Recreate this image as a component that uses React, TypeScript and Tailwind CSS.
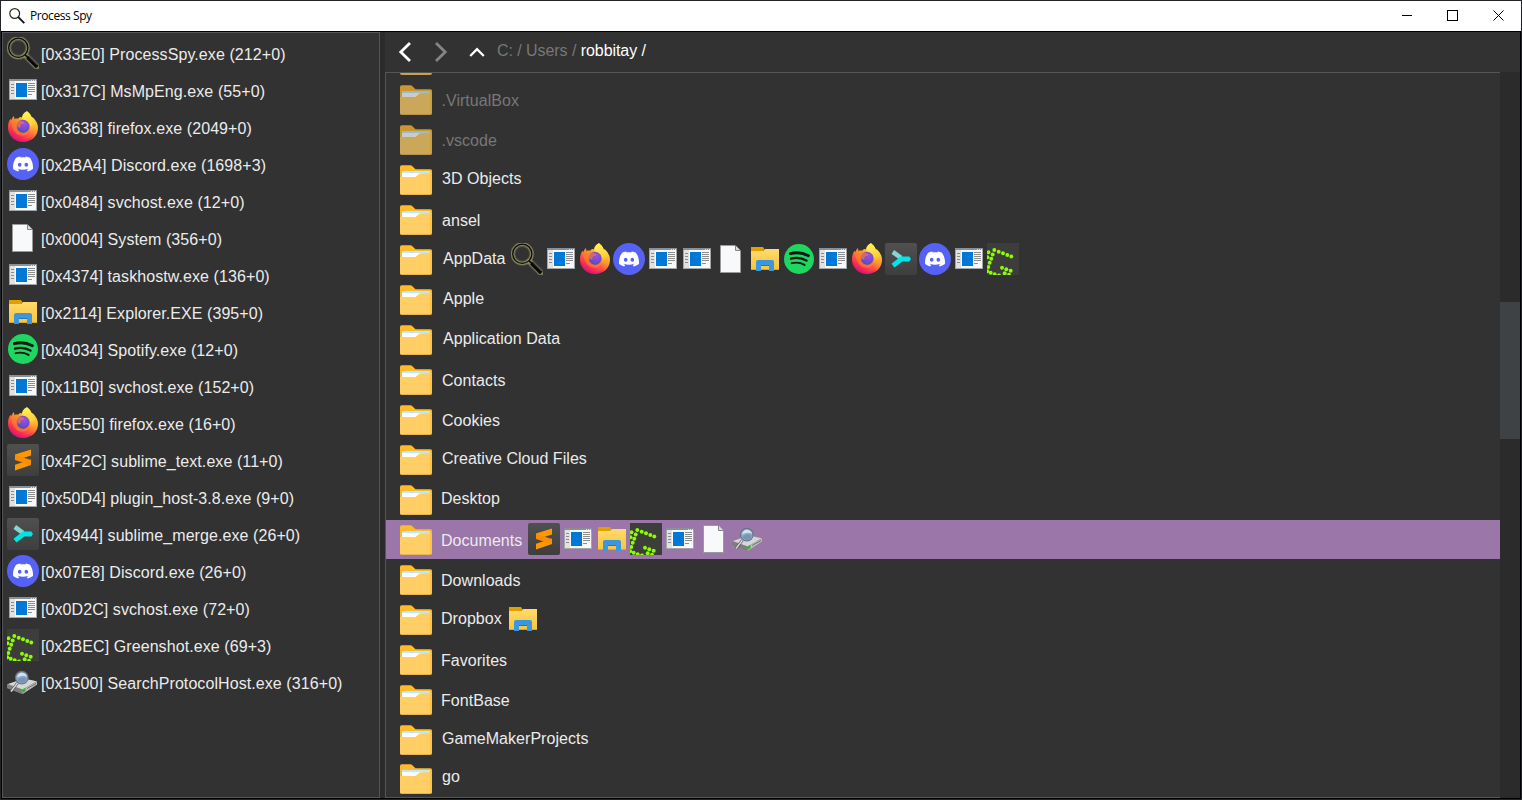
import React from "react";
import { SiDiscord } from "react-icons/si";

type IconName =
  | "spy" | "window" | "firefox" | "discord" | "file" | "explorer"
  | "spotify" | "sublime" | "merge" | "greenshot" | "search";

const Spy = () => (
  <svg viewBox="0 0 32 32" className="block size-8">
    <g fill="none" stroke="#98956a" strokeLinecap="round">
      <circle cx="11.3" cy="10.8" r="9.4" strokeWidth="5" opacity=".35" />
      <circle cx="11.3" cy="10.8" r="9.6" strokeWidth="3.2" opacity=".75" />
      <path d="M18.5 18.5 30 30" strokeWidth="7" opacity=".3" />
      <path d="M18.5 18.5 30 30" strokeWidth="5.200" opacity=".6" />
    </g>
    <circle cx="11.3" cy="10.8" r="9.6" fill="none" stroke="#0b0b08" strokeWidth="1.3" />
    <path d="M18 17.6 21 20.6" stroke="#0b0b08" strokeWidth="1.5" />
    <path d="M20.5 20.3 30.2 30" stroke="#050505" strokeWidth="3.6" />
    <path d="M22 20.4 30 28.2" stroke="#55533a" strokeWidth=".6" />
  </svg>
);

const WindowIcon = () => (
  <svg viewBox="0 0 32 32" className="block size-8" shapeRendering="crispEdges">
    <rect x="2" y="5" width="28" height="21" fill="#a3a6a8" />
    <rect x="2" y="5" width="28" height="2" fill="#8b9094" />
    <path d="M24 5.5h1v1h-1zM26 5.5h1v1h-1zM28 5.5h1v1h-1z" fill="#e3e6e8" />
    <rect x="3" y="7" width="26" height="18" fill="#f8f8f8" />
    <rect x="3" y="7" width="5" height="18" fill="#e2e2e2" />
    <rect x="9" y="9" width="11" height="14" fill="#0078d7" />
    <path d="M4 10h3M4 13h3M4 16h3M4 19h3" transform="translate(0 .5)" stroke="#8c8c8c" />
    <path d="M21 9.5h7M21 11.5h7M21 13.5h7M21 15.5h7M21 17.5h7M21 20.5h4" stroke="#8c8c8c" />
  </svg>
);

const Firefox = () => (
  <svg viewBox="0 0 32 32" className="block size-8">
    <defs>
      <linearGradient id="ffBody" x1=".85" y1=".1" x2=".3" y2="1">
        <stop offset="0" stopColor="#fff44f" />
        <stop offset=".3" stopColor="#ffb52c" />
        <stop offset=".55" stopColor="#ff7139" />
        <stop offset=".8" stopColor="#fb2e50" />
        <stop offset="1" stopColor="#d8107e" />
      </linearGradient>
      <radialGradient id="ffGlobe" cx=".6" cy=".3" r=".7">
        <stop offset="0" stopColor="#a64af0" />
        <stop offset="1" stopColor="#4c50b8" />
      </radialGradient>
      <linearGradient id="ffTail" x1=".5" y1="0" x2=".6" y2="1">
        <stop offset="0" stopColor="#fff554" />
        <stop offset=".6" stopColor="#ffd13a" />
        <stop offset="1" stopColor="#ff9a2c" stopOpacity="0" />
      </linearGradient>
    </defs>
    <g transform="translate(0 -.6)">
      <path d="M20 .8c2.8 1.8 4 4.200 4.800 6.300l1-.3c2.800 2.700 5.200 6.200 5.200 10.500C31 25.400 24.600 31.500 16 31.500S1 25.200 1 17.200c0-4 1-6.800 2.600-8.800l.6 1.500C5.200 7.500 6 6.300 7 5.500l.3 3c1.200-.4 2.500-.5 3.800-.2C12.300 6.500 14 6 14.800 7c.4-3 2.400-5 5.200-6.200Z" fill="url(#ffBody)" />
      <path d="M20 .8c3.500 2.500 4 5 5.500 7.600 2.500 4.500 3.500 10.500-1 14.500-2.500-2-1.500-5.500-2.500-8-1.200-3.500-5-4.500-6.800-6.600C15.500 4.800 17 2.200 20 .8Z" fill="url(#ffTail)" />
      <circle cx="16" cy="16" r="6.600" fill="url(#ffGlobe)" />
      <path d="M4 10.5c3-2.300 6-1.800 8.200-1.200 1.200.4 2.100 1.500 3.800 1.700 1.500.2 1.600.7 1 1.500-.9 1-2.700 1-3.300 1.800-.6.900.6 1.700-.4 2.500-1.200.7-2.500.1-3.100-.6-.1 3.300 2 5.800 5.800 6.300 3.500 0 6-2.400 6.500-6.200.9 5.200-2.300 9-7 9-6 0-10-4.500-11.500-14.800Z" fill="#ff8428" opacity=".6" />
      <path d="M3.500 20c1 5.500 5.500 9.500 11.500 9.700 5 .2 9-1.800 11-4.200-2.500 4-6 6-10.500 6C8.500 31.300 4 27 3.500 20Z" fill="#e5147a" opacity=".55" />
    </g>
  </svg>
);

const Discord = () => (
  <span className="flex size-8 items-center justify-center rounded-full bg-[#5562f5]">
    <SiDiscord className="size-5 text-white" />
  </span>
);

const FileIcon = () => (
  <svg viewBox="0 0 32 32" className="block size-8">
    <path d="M5.500 2.500h14.500l5.500 5.500v21.500h-20Z" fill="#f8f9fa" stroke="#9a9a9a" />
    <path d="M20.500 2.500v5h5" fill="#dcdcdc" stroke="#858585" />
  </svg>
);

const Explorer = () => (
  <svg viewBox="0 0 32 32" className="block size-8">
    <defs>
      <linearGradient id="exBody" x1="0" y1="0" x2="0" y2="1">
        <stop offset="0" stopColor="#ffdb6c" />
        <stop offset="1" stopColor="#f9c43c" />
      </linearGradient>
    </defs>
    <path d="M2 4h12l1.300 2-1.300 2H2Z" fill="#e2a000" />
    <path d="M2 8h12l2-2h14v21H2Z" fill="url(#exBody)" />
    <path d="M2 26.500h28" stroke="#dba62c" />
    <path d="M7 28V19q0-2 2-2h14q2 0 2 2v9h-5v-5.500h-8V28Z" fill="#3a97dd" />
    <path d="M12 22.500h8" stroke="#2478b8" />
  </svg>
);

const Spotify = () => (
  <svg viewBox="0 0 32 32" className="block size-8">
    <circle cx="16" cy="16" r="15" fill="#1ed760" />
    <g fill="none" stroke="#0c1a10" strokeLinecap="round">
      <path d="M7.300 10.700q9.500-2.600 18.200 2" strokeWidth="2.800" />
      <path d="M8 15.700q8.500-2.200 15.500 1.900" strokeWidth="2.300" />
      <path d="M8.600 20.200q7.200-1.700 13 1.700" strokeWidth="1.900" />
    </g>
  </svg>
);

const Sublime = () => (
  <svg viewBox="0 0 32 32" className="block size-8">
    <defs>
      <linearGradient id="stBg" x1="0" y1="0" x2="0" y2="1">
        <stop offset="0" stopColor="#505050" />
        <stop offset="1" stopColor="#3e3e3e" />
      </linearGradient>
    </defs>
    <rect width="32" height="32" rx="2" fill="url(#stBg)" />
    <path d="M8 10.600 24 5.500v6l-8 2.600-8-2.500Z" fill="#ff9800" />
    <path d="M8 20.800 24 15.500v5.600L8 26.500Z" fill="#ff9800" />
    <path d="M8 11v5l16 5.200V16Z" fill="#f98e00" />
  </svg>
);

const Merge = () => (
  <svg viewBox="0 0 32 32" className="block size-8">
    <rect width="32" height="32" rx="2" fill="url(#stBg)" />
    <path d="m7.800 9 8.200 5.800" stroke="#84d5d3" strokeWidth="4.600" />
    <path d="m8 22.700 8.500-6.700h6.800" fill="none" stroke="#00e5e5" strokeWidth="4.800" />
    <path d="M23 13.600h1.300L26 16l-1.700 2.400H23Z" fill="#00e5e5" />
  </svg>
);

const DOTS: [number, number][] = [
  [7.3, 7], [11.7, 8.700], [16, 10.300], [20.300, 12], [24.300, 13.500], [5.700, 11.500],
  [4.300, 15.700], [2.700, 19.700], [1.300, 24], [1.500, 9.300], [0.500, 14.300],
  [0.300, 28.300], [3.700, 29.700], [7.700, 31.300], [12, 32.500], [15, 24.700],
  [19.300, 26.200], [23.700, 27.700], [17.700, 30.200], [22, 31.700],
];

const Greenshot = () => (
  <svg viewBox="0 0 32 32" className="block size-8">
    <rect width="32" height="32" fill="#3d3d3b" />
    {DOTS.map(([x, y]) => (
      <circle key={`${x}-${y}`} cx={x} cy={y} r="1.950" fill="#8aff00" />
    ))}
  </svg>
);

const SearchHost = () => (
  <svg viewBox="0 0 32 32" className="block size-8">
    <path d="M0 18.500 17 13l13 2.500v3L15.500 28 0 22Z" fill="#8b8c8b" />
    <path d="M1 18 17 12.500l12.500 2.700L15.500 23.500Z" fill="#d5d6d6" />
    <path d="M15.500 23.500 30 15.500v3L15.500 28Z" fill="#b9bab9" />
    <path d="m20 22.500 9-5" stroke="#727372" />
    <path d="M0 18.500 15.500 23.500V28L0 22Z" fill="#7d7f7e" />
    <path d="m15.500 23.500 3-1.700v3.500l-3 1.700Z" fill="#33b52b" />
    <path d="M10.500 17 4 25.500" stroke="#4a4a4a" strokeWidth="2.800" />
    <path d="M10.500 17 4 25.500" stroke="#d9d9d9" strokeWidth="1.500" />
    <circle cx="14.800" cy="11.700" r="6.300" fill="#8ea9c4" stroke="#657586" strokeWidth="1.100" />
    <path d="M10 11.500q1.500-5.500 6-4.500 3.500.5 4 4-4-2.500-10 .5Z" fill="#d3e2f0" />
    <path d="M10.500 14q3.500-4 9-1.500-1 4-4.500 4.500-3-.5-4.500-3Z" fill="#7595b7" />
  </svg>
);

const ICONS: Record<IconName, () => React.ReactElement> = {
  spy: Spy, window: WindowIcon, firefox: Firefox, discord: Discord, file: FileIcon,
  explorer: Explorer, spotify: Spotify, sublime: Sublime, merge: Merge,
  greenshot: Greenshot, search: SearchHost,
};

const AppIcon = ({ name }: { name: IconName }) => {
  const Icon = ICONS[name];
  return <span className="size-8 shrink-0"><Icon /></span>;
};

const Folder = ({ dim }: { dim?: boolean }) => (
  <svg viewBox="0 0 32 32" className={dim ? "block size-8 shrink-0 opacity-75" : "block size-8 shrink-0"}>
    <path d="M0 3q0-1.700 1.700-1.700H10.500q1 0 1.600.8L15.500 5.300h15Q32 5.300 32 6.800V29q0 1.700-1.500 1.700h-29Q0 30.700 0 29Z" fill="#ffb92a" />
    <path d="M2 7h28v4H2Z" fill="#b9ecfa" />
    <path d="M2 9h20v4H2Z" fill="#fff" />
    <path d="M0 13h15.500l4.300-3.700H30.300V30.700H1.500Q0 30.700 0 29Z" fill="#ffcf66" />
    <path d="M30.300 8.500H32V29q0 1.700-1.700 1.700Z" fill="#ffc344" />
    <path d="M1 30.500h30" stroke="#e0a844" strokeWidth=".6" />
  </svg>
);

const PROCESSES: [IconName, string][] = [
  ["spy", "[0x33E0] ProcessSpy.exe (212+0)"],
  ["window", "[0x317C] MsMpEng.exe (55+0)"],
  ["firefox", "[0x3638] firefox.exe (2049+0)"],
  ["discord", "[0x2BA4] Discord.exe (1698+3)"],
  ["window", "[0x0484] svchost.exe (12+0)"],
  ["file", "[0x0004] System (356+0)"],
  ["window", "[0x4374] taskhostw.exe (136+0)"],
  ["explorer", "[0x2114] Explorer.EXE (395+0)"],
  ["spotify", "[0x4034] Spotify.exe (12+0)"],
  ["window", "[0x11B0] svchost.exe (152+0)"],
  ["firefox", "[0x5E50] firefox.exe (16+0)"],
  ["sublime", "[0x4F2C] sublime_text.exe (11+0)"],
  ["window", "[0x50D4] plugin_host-3.8.exe (9+0)"],
  ["merge", "[0x4944] sublime_merge.exe (26+0)"],
  ["discord", "[0x07E8] Discord.exe (26+0)"],
  ["window", "[0x0D2C] svchost.exe (72+0)"],
  ["greenshot", "[0x2BEC] Greenshot.exe (69+3)"],
  ["search", "[0x1500] SearchProtocolHost.exe (316+0)"],
];

type Entry = {
  name: string; dim?: boolean; selected?: boolean; raised?: boolean; last?: boolean;
  inset?: string; pad?: string; icons?: IconName[];
};

const ENTRIES: Entry[] = [
  { name: ".VirtualBox", dim: true, inset: "ml-[9.500px]" },
  { name: ".vscode", dim: true, inset: "ml-[9.500px]" },
  { name: "3D Objects", raised: true, inset: "ml-[10px]" },
  { name: "ansel", inset: "ml-[10px]" },
  {
    name: "AppData", raised: true, inset: "ml-[11px]", pad: "w-[68px]",
    icons: ["spy", "window", "firefox", "discord", "window", "window", "file", "explorer",
      "spotify", "window", "firefox", "merge", "discord", "window", "greenshot"],
  },
  { name: "Apple", raised: true, inset: "ml-[11px]" },
  { name: "Application Data", raised: true, inset: "ml-[11px]" },
  { name: "Contacts", inset: "ml-[10px]" },
  { name: "Cookies", inset: "ml-[10px]" },
  { name: "Creative Cloud Files", raised: true, inset: "ml-[10px]" },
  { name: "Desktop", raised: true },
  {
    name: "Documents", selected: true, pad: "w-[86.500px]",
    icons: ["sublime", "window", "explorer", "greenshot", "window", "file", "search"],
  },
  { name: "Downloads" },
  { name: "Dropbox", raised: true, pad: "w-[66px]", icons: ["explorer"] },
  { name: "Favorites" },
  { name: "FontBase" },
  { name: "GameMakerProjects", raised: true, inset: "ml-[10px]" },
  { name: "go", last: true, inset: "ml-[10px]" },
];

const TitleBar = () => (
  <header className="flex h-[30px] shrink-0 items-center bg-white text-black">
    <svg viewBox="0 0 16 16" className="ml-2 size-4">
      <circle cx="5.700" cy="5.500" r="4.900" fill="none" stroke="#2c2a1d" strokeWidth="1.200" />
      <path d="m9.300 9.200 6 6" stroke="#111" strokeWidth="1.900" />
    </svg>
    <span className="ml-[5px] font-['Open_Sans','Noto_Sans',sans-serif] text-[12px] leading-4 tracking-[-0.42px]">Process Spy</span>
    <div className="ml-auto flex">
      {["M1 5.500h10", "M.5.500h10v10H.5Z", "m.5.500 10 10m0-10-10 10"].map((d, i) => (
        <span key={d} className="h-[30px] w-[46px] pt-[9px] pl-[18px]">
          <svg width="11" height="11" className="block" fill="none" stroke="#000" shapeRendering={i < 2 ? "crispEdges" : undefined}>
            <path d={d} />
          </svg>
        </span>
      ))}
    </div>
  </header>
);

const ProcessList = () => (
  <aside className="flex w-[378px] shrink-0 flex-col gap-[5px] border border-[#555] bg-[#323232] pt-1 pl-1">
    {PROCESSES.map(([icon, label]) => (
      <div key={label} className="flex h-8 shrink-0 gap-[2px]">
        <AppIcon name={icon} />
        <span className="pt-2 text-[16px] leading-5 tracking-[0.08px] whitespace-pre">{label}</span>
      </div>
    ))}
  </aside>
);

const Toolbar = () => (
  <nav className="flex h-10 shrink-0 items-center bg-[#323232]">
    <svg width="112" height="40" className="block shrink-0" fill="none" strokeWidth="2.800">
      <path d="M25 11 15.800 20l9.200 9" stroke="#fff" />
      <path d="m51 11 9.200 9-9.200 9" stroke="#858585" />
      <path d="m85.200 24 6.800-6.800 6.800 6.800" stroke="#fff" strokeWidth="2.300" />
    </svg>
    <span className="pb-[3px] text-[16px] leading-5 tracking-[-0.06px] whitespace-pre text-[#777]">
      C: / Users / <span className="text-white">robbitay /</span>
    </span>
  </nav>
);

const FolderRow = ({ entry }: { entry: Entry }) => (
  <div className={entry.selected
    ? "flex h-10 shrink-0 border-b border-[#323232] bg-[#9a76a9] pl-[14px]"
    : entry.last
      ? "-mt-px flex h-10 shrink-0 pl-[14px]"
      : "flex h-10 shrink-0 pl-[14px]"}>
    <div className="pt-1"><Folder dim={entry.dim} /></div>
    <span className={`${entry.last ? "pt-2" : entry.raised ? "pt-[9px]" : "pt-[11px]"} ${entry.dim ? "text-[#777]" : "text-[#ebebeb]"} ${entry.pad ?? ""} ${entry.inset ?? "ml-[9px]"} text-[16px] leading-5 tracking-[0.04px] whitespace-pre`}>
      {entry.name}
    </span>
    {entry.icons && (
      <div className="flex gap-[2px] pt-[3px]">
        {entry.icons.map((icon, i) => <AppIcon key={i} name={icon} />)}
      </div>
    )}
  </div>
);

export default function App() {
  return (
    <div className="flex h-[800px] w-[1522px] flex-col overflow-hidden border border-[#222428] bg-black font-['Liberation_Sans',Arial,sans-serif] text-[#ebebeb]">
      <TitleBar />
      <div className="mx-px mt-px mb-px flex min-h-0 flex-1 bg-[#2b2b2b]">
        <ProcessList />
        <main className="ml-[5px] flex min-w-0 flex-1 flex-col">
          <Toolbar />
          <div className="flex min-h-0 flex-1">
            <section className="flex min-w-0 flex-1 flex-col overflow-hidden border-y border-l border-[#555] bg-[#323232]">
              <div className="flex h-[7px] shrink-0 flex-col justify-end overflow-hidden pb-[5px] pl-[14px]">
                <div className="h-[2px] w-8 rounded-b-sm bg-[#cca04c]" />
              </div>
              {ENTRIES.map((e) => <FolderRow key={e.name} entry={e} />)}
            </section>
            <div className="w-5 shrink-0 bg-[#2b2b2b] pt-[230px]">
              <div className="h-[137px] bg-[#3e4245]" />
            </div>
          </div>
        </main>
      </div>
    </div>
  );
}
